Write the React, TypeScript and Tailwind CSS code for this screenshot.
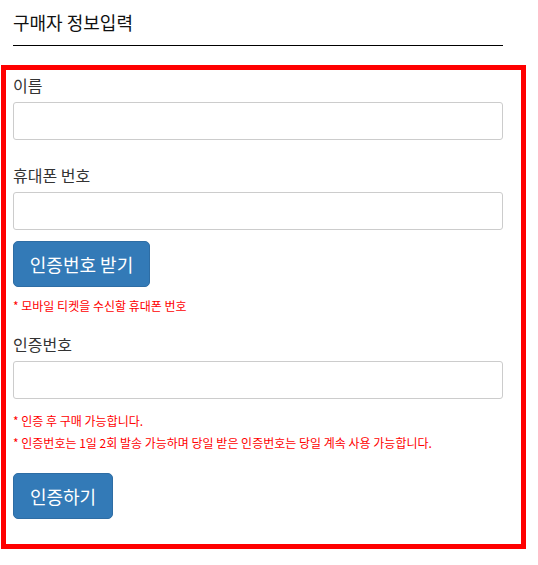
import React from 'react';

const font = { fontFamily: '"Noto Sans CJK KR", "Noto Sans", sans-serif' };

function Field({ label }: { label: string }) {
  return (
    <div className="flex flex-col">
      <label className="text-[16px] leading-[22px] text-[#333]">{label}</label>
      <input type="text" className="mt-[6px] h-[38px] w-[490px] rounded-[3px] border border-[#ccc] bg-white px-3 outline-none" />
    </div>
  );
}

export default function App() {
  return (
    <div className="min-h-screen bg-white" style={font}>
      <div className="pl-[13px] pt-[9px]">
        <h2 className="text-[18px] leading-[26px] text-[#111]">구매자 정보입력</h2>
        <div className="mt-[10px] h-px w-[490px] bg-black" />
      </div>

      <div className="ml-[1px] mt-[19px] w-[525px] border-[5px] border-[#ff0000] pb-[25px] pl-[7px] pt-[4px]">
        <Field label="이름" />

        <div className="mt-[24px]">
          <Field label="휴대폰 번호" />
        </div>

        <button className="mt-[11px] flex h-[46px] w-[137px] items-center justify-center rounded-[5px] border border-[#2e6da4] bg-[#337ab7] text-[18px] text-white">
          인증번호 받기
        </button>
        <p className="mt-[10px] text-[12px] leading-[18px] text-[#ff0000]">* 모바일 티켓을 수신할 휴대폰 번호</p>

        <div className="mt-[18px]">
          <Field label="인증번호" />
        </div>

        <p className="mt-[13px] text-[12px] leading-[18px] text-[#ff0000]">* 인증 후 구매 가능합니다.</p>
        <p className="mt-[4px] text-[12px] leading-[18px] text-[#ff0000]">
          * 인증번호는 1일 2회 발송 가능하며 당일 받은 인증번호는 당일 계속 사용 가능합니다.
        </p>

        <button className="mt-[21px] flex h-[46px] w-[100px] items-center justify-center rounded-[5px] border border-[#2e6da4] bg-[#337ab7] text-[18px] text-white">
          인증하기
        </button>
      </div>
    </div>
  );
}
